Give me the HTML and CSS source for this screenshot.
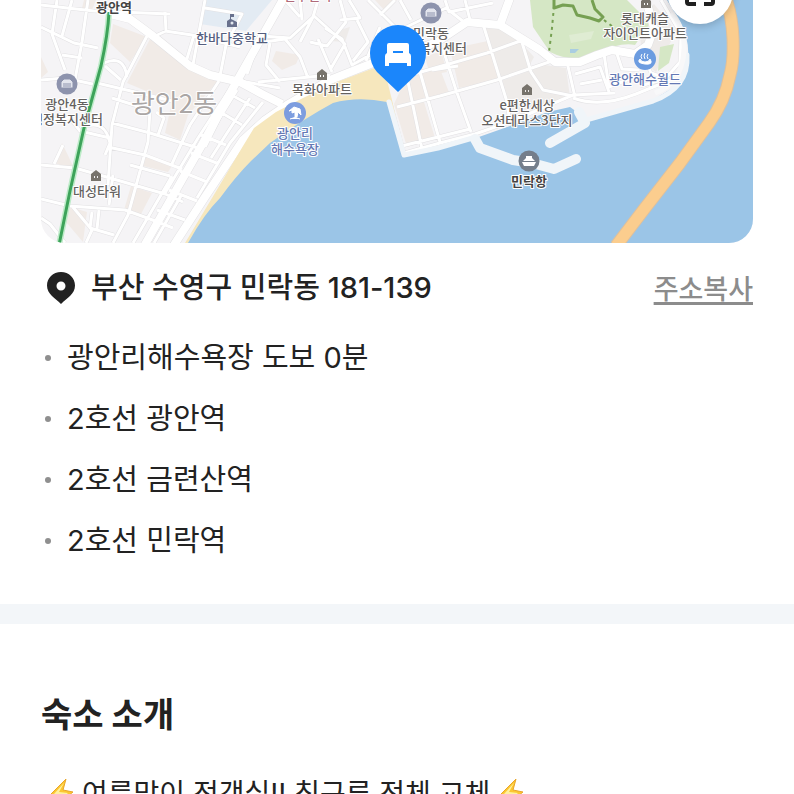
FILE: index.html
```html
<!DOCTYPE html>
<html lang="ko">
<head>
  <meta charset="UTF-8">
  <meta name="viewport" content="width=device-width, initial-scale=1">
  <title>숙소 위치</title>
  <link rel="stylesheet" href="styles.css">
</head>
<body>

  <section class="location">
    <div class="map">
      <svg class="map-canvas" viewBox="41 0 712 243" role="img" aria-label="지도">
        <defs>
          <path id="main-roads" d="M110 14L130 19L153 36L190 66L210 75L240 82L262 94L282 104 M143 248L203 143L233 88L285 -4 M172 248L205 197L243 140L265 120L287 105L330 80L373 63L400 55L437 42L467 22L500 25L510 -2 M500 25L540 50L555 62L580 62L597 55L612 50L635 54L648 45L654 28L646 0"/>
          <path id="small-roads" d="M41 5L94 11L170 14 M57 0L52 34L65 70 M72 0L62 36 M88 0L82 42L74 85 M41 27L74 43L98 48 M41 80L65 78L97 85 M62 55L82 58 M147 36L123 82L112 125L108 185 M97 83L135 92L172 101 M104 63Q124 54 127 77 M105 66L121 80 M165 12L166 31L153 37 M165 31L192 35L216 41L240 47 M192 70L205 0 M186 62L194 35 M220 76L226 45L242 14L205 8 M112 123L150 133L198 148 M108 147L145 155L182 169 M112 98L150 110L148 142L128 215L113 243 M156 112L164 118L158 135 M84 127Q105 119 110 143L105 155 M41 120L70 118L80 131L110 138 M63 145L54 164 M41 165L75 168L110 178L165 194L183 202 M41 199L70 206L125 210L150 219L173 228 M41 218L50 224L65 243 M72 206L92 230L86 243 M92 212L90 228L114 235 M99 210L97 229 M113 175L109 205 M130 165L170 176 M228 92L198 138L165 193 M172 176L133 243 M182 194L154 243 M219 81L190 125L171 166 M201 135L226 145 M191 153L219 164 M180 171L207 182 M169 190L197 201 M157 210L185 220 M217 110L242 125 M228 93L255 108 M237 90L219 119L205 147 M250 98L227 133L211 158 M263 102L230 143L197 198 M280 88L240 81 M258 82L330 75 M247 74L258 43L285 39L300 57L308 78 M270 43L266 65L280 82 M262 36L290 38L314 16L345 44L330 70 M302 20L300 0 M318 0L313 17L300 42 M318 39L332 72 M325 28L342 39L352 65L370 55 M340 0L346 22L327 46L310 42 M340 20L360 18L349 0 M357 20L368 42L353 61 M285 0L300 17 M368 0L378 10L400 32L418 48 M380 27L366 61 M380 15L395 0 M400 30L446 8L464 22 M411 20L400 0 M445 0L449 12L493 3 M465 0L470 20 M397 107L440 96L497 80L552 61 M407 76L487 53L523 40 M408 82L422 149 M418 65L440 142 M443 49L456 90L471 132 M483 24L507 102L510 123 M521 39L531 72L543 90L573 96 M432 70L458 66 M389 98L404 153L440 143L475 134L510 122L573 95L615 93 M402 146L470 129 M567 62L575 97 M575 74L600 67L609 92 M580 84L602 80 M604 54L609 87L640 75 M617 54L622 69L639 70 M661 0L681 34L680 62L665 79L640 86 M644 57L651 73L663 77 M655 28L672 31 M573 98Q600 108 636 94L678 77"/>
          <path id="apartment" d="M-5 5V-2L0 -6L5 -2V5ZM-2 0V2H-1V0ZM1 0V2H2V0Z" fill-rule="evenodd"/>
          <g id="office">
            <circle r="10.5"/>
            <path d="M-6 -2L-3 -5H3L6 -2V4H-6ZM-4 0H4M-4 2H4" fill="#e3e5ee" stroke="#8d93ad" stroke-width="1"/>
          </g>
        </defs>

        <rect class="land" x="41" width="712" height="243"/>

        <!-- blocks -->
        <path class="school" d="M203 0H272L246 31L200 24Z"/>
        <path class="block" d="M113 24L147 37L130 62L110 43ZM150 39L190 68L219 80L188 115L180 140L165 133L172 102L127 83ZM84 0H96L92 10L82 8ZM41 57L48 72L41 78ZM62 143L75 170L55 163ZM144 155L174 163L168 172L143 166ZM131 186L152 193L140 216L124 210ZM70 207L87 212L83 242L66 222ZM276 51L300 55L296 64L282 70L272 61ZM202 75L219 80L211 89ZM375 0L386 12L397 0ZM406 78L440 69L450 95L424 102L435 138L407 147L394 104ZM425 57L441 51L447 72L430 75ZM450 49L520 34L521 40L498 80L459 88Z"/>
        <path class="block-gray" d="M485 28L510 30L534 57L527 70L501 78L511 119L530 113L570 97L566 68L545 65L501 81ZM638 19L654 4L676 31L656 72L643 62ZM336 31L350 27L345 42L330 41Z"/>
        <path class="park" d="M530 0L533 27L550 52Q574 64 597 53T635 45L650 23L627 0Z"/>
        <path class="park" d="M660 47L674 44L669 63L658 71Z"/>
        <path class="park-lawn" d="M569 35L594 31L591 39L571 43Z"/>

        <use href="#small-roads" class="road-edge small"/>
        <use href="#main-roads" class="road-edge main"/>
        <use href="#small-roads" class="road small"/>
        <use href="#main-roads" class="road main"/>

        <!-- water and shore -->
        <path class="beach" d="M185 243L215 193L243 146L254 128L276 112L303 98L337 82L374 68L385 72L392 100L404 155L310 180L205 243Z"/>
        <path class="water" d="M188 243Q204 214 220 198Q236 176 251 161L270 143Q305 118 333 103Q358 96 387 102L396 121L403 157L476 138L510 126L548 112L570 107L588 120L653 100L679 84Q687 76 688 61Q690 38 679 20L667 0H753V243Z"/>
        <path class="pier" d="M389 102L404 155L438 148L476 137"/>
        <path class="pier wide" d="M475 139L480 148L513 160L532 163L554 169L576 159M550 143L585 123L579 112"/>
        <path class="pier" d="M586 120L653 101Q689 88 687 55"/>
        <path class="shore-road" d="M672 13Q688 34 683 59T655 93"/>

        <path class="bridge-edge" d="M725 -4Q732 15 733 38T730 75Q725 101 709 123L680 163L645 208L616 246"/>
        <path class="bridge" d="M725 -4Q732 15 733 38T730 75Q725 101 709 123L680 163L645 208L616 246"/>

        <path class="trail-dots" d="M554 6L552 28L549 52M604 20L613 27"/>
        <path class="trail" d="M554 0V8L563 5L573 6L577 15L590 18L599 21L603 17L595 9L592 0"/>

        <path class="subway-glow" d="M109 12Q108 34 101 66L84 128L70 191L59 245"/>
        <path class="subway" d="M109 12Q108 34 101 66L84 128L70 191L59 245"/>

        <!-- place icons -->
        <g fill="#8d93ad">
          <use href="#office" x="67" y="84"/>
          <use href="#office" x="431" y="13"/>
        </g>
        <g fill="#77736c">
          <use href="#apartment" x="96" y="176"/>
          <use href="#apartment" x="322" y="75"/>
          <use href="#apartment" x="527" y="90"/>
          <use href="#apartment" x="646" y="3"/>
        </g>
        <path d="M227 27V21L230 19V14H234V17H231V19L237 22V27Z" fill="#69718d"/>
        <circle cx="232" cy="23" r="1.5" fill="#e2e8ef"/>
        <g transform="translate(295 113)">
          <circle r="11" fill="#7d9ddf"/>
          <path d="M-6 -2L-1 -6L5 -4L6 2L3 -1L2 4H0V-1L-3 0V-3ZM-5 6Q0 3 5 6" fill="#fff" stroke="#fff" stroke-width="1"/>
        </g>
        <g transform="translate(645 59)">
          <circle r="11" fill="#6c9ce0"/>
          <path d="M-3 -5Q-5 -3 -3 0M0 -6Q-2 -3 0 0M3 -5Q1 -3 3 0" fill="none" stroke="#fff"/>
          <path d="M-5 0Q-9 4 0 5T5 0Q4 3 0 3T-5 0Z" fill="#fff" stroke="#fff"/>
        </g>
        <g transform="translate(529 161)">
          <circle r="10.5" fill="#747e8b"/>
          <path d="M-6 0L-3 -3V-5H3V-3L6 0ZM-7 1H7L5 5H-5Z" fill="#fff"/>
        </g>
        <path d="M570 49H579L575 53H570Z" fill="#a9cde1"/>

        <g class="place">
          <text class="station" x="114" y="12">광안역</text>
          <text class="clinic" x="308" y="0">산부인과</text>
          <text class="public" x="232" y="43">한바다중학교</text>
          <text x="67" y="109">광안4동</text>
          <text x="67" y="124">행정복지센터</text>
          <text class="district" x="174" y="113">광안2동</text>
          <text x="97" y="196">대성타워</text>
          <text x="322" y="94">목화아파트</text>
          <text class="leisure" x="295" y="138">광안리</text>
          <text class="leisure" x="295" y="154">해수욕장</text>
          <text x="431" y="38">민락동</text>
          <text x="431" y="53">행정복지센터</text>
          <text x="527" y="110">e편한세상</text>
          <text x="527" y="125">오션테라스3단지</text>
          <text class="harbor" x="529" y="186">민락항</text>
          <text x="645" y="23">롯데캐슬</text>
          <text x="645" y="38">자이언트아파트</text>
          <text class="leisure" x="645" y="84">광안해수월드</text>
        </g>

        <path d="M398 92L377 72Q370 64 370 53A28 28 0 0 1 426 53Q426 64 419 72Z" fill="#1b86fb"/>
        <path d="M389 43H407Q409 43 409 45V53Q411 54 411 56V66H407V63H389V66H385V56Q385 54 387 53V45Q387 43 389 43ZM393 51V53H403V51Z" fill="#fff" fill-rule="evenodd"/>
      </svg>

      <button class="expand" type="button" aria-label="지도 크게 보기">
        <svg width="30" height="30" viewBox="0 0 30 30" fill="none" stroke="#202020" stroke-width="4" stroke-linejoin="round">
          <path d="M2 11V4Q2 2 4 2H11M19 2H26Q28 2 28 4V11M28 19V26Q28 28 26 28H19M11 28H4Q2 28 2 26V19"/>
        </svg>
      </button>
    </div>

    <div class="address">
      <svg class="address-pin" width="28" height="34" viewBox="0 0 28 34" aria-hidden="true">
        <path d="M14 1C6 1 0 7 0 14.500C0 23 8 27 14 33C20 27 28 23 28 14.500C28 7 22 1 14 1ZM14 10.500A4.500 4.500 0 1 1 14 19.500A4.500 4.500 0 0 1 14 10.500Z" fill="#222" fill-rule="evenodd"/>
      </svg>
      <span class="address-text">부산 수영구 민락동 181-139</span>
      <button class="copy" type="button">주소복사</button>
    </div>

    <ul class="nearby">
      <li>광안리해수욕장 도보 0분</li>
      <li>2호선 광안역</li>
      <li>2호선 금련산역</li>
      <li>2호선 민락역</li>
    </ul>
  </section>

  <section class="intro">
    <h2>숙소 소개</h2>
    <p>
      <svg class="bolt" width="28" height="32" viewBox="0 0 28 32" aria-hidden="true">
        <path d="M19 1L2 18L12 19L5 31L26 14L16 12Z" fill="#fcc832" stroke="#e9a52a" stroke-linejoin="round"/>
        <path d="M17 5L7 16L15 17L11 24L21 15L12 14Z" fill="#fff0a0"/>
      </svg>
      <span>여름맞이 전객실!! 침구류 전체 교체</span>
      <svg class="bolt" width="28" height="32" viewBox="0 0 28 32" aria-hidden="true">
        <path d="M19 1L2 18L12 19L5 31L26 14L16 12Z" fill="#fcc832" stroke="#e9a52a" stroke-linejoin="round"/>
        <path d="M17 5L7 16L15 17L11 24L21 15L12 14Z" fill="#fff0a0"/>
      </svg>
    </p>
  </section>

</body>
</html>
```
FILE: styles.css
```css
* {
  box-sizing: border-box;
}

body {
  margin: 0;
  background-color: #fff;
  color: #222;
  font-family: Inter, "Noto Sans CJK KR", sans-serif;
  font-size: 28px;
  line-height: 42px;
}

button {
  border: none;
  padding: 0;
  font: inherit;
  cursor: pointer;
}

.location {
  padding: 0 41px 42px;
  border-bottom: 20px solid #f3f6f9;
}

/* Map */
.map {
  position: relative;
  overflow: hidden;
  border-radius: 0 0 24px 24px;
}

.map-canvas {
  display: block;
  width: 100%;
}

.land {
  fill: #f5f4f6;
}

.school {
  fill: #e3ebf3;
}

.block {
  fill: #f1ebe7;
}

.block-gray {
  fill: #eeebe9;
}

.park {
  fill: #d5e7c5;
}

.park-lawn {
  fill: #dfecd3;
}

.beach {
  fill: #f6e7bd;
}

.water {
  fill: #9bc5e7;
}

.road,
.road-edge,
.pier,
.shore-road,
.bridge,
.bridge-edge,
.trail,
.trail-dots,
.subway,
.subway-glow {
  fill: none;
  stroke-linejoin: round;
}

.road {
  stroke: #fff;
}

.road.small {
  stroke-width: 3px;
}

.road.main {
  stroke-width: 8px;
}

.road-edge {
  stroke: #e2e1e3;
}

.road-edge.small {
  stroke-width: 4px;
}

.road-edge.main {
  stroke-width: 9px;
}

.pier {
  stroke: #f0f5f9;
  stroke-width: 5px;
  stroke-linecap: round;
}

.pier.wide {
  stroke-width: 10px;
}

.shore-road {
  stroke: #f8f8f9;
  stroke-width: 5px;
}

.bridge-edge {
  stroke: #dfc09b;
  stroke-width: 13px;
}

.bridge {
  stroke: #fbcd8e;
  stroke-width: 11px;
}

.trail,
.trail-dots {
  stroke: #76a052;
  stroke-width: 2px;
}

.trail {
  stroke-width: 3px;
}

.trail-dots {
  stroke-dasharray: 3 4;
}

.subway-glow {
  stroke: #bdebc8;
  stroke-width: 6px;
}

.subway {
  stroke: #3da35a;
  stroke-width: 3px;
}

.place {
  fill: #65625f;
  stroke: #fff;
  stroke-width: 2px;
  stroke-linejoin: round;
  paint-order: stroke;
  font-family: "Noto Sans CJK KR", sans-serif;
  font-size: 13px;
  font-weight: 500;
  text-anchor: middle;
}

.place .station,
.place .harbor {
  fill: #444;
  font-weight: 700;
}

.place .clinic {
  fill: #b06a7a;
}

.place .public {
  fill: #555e7e;
}

.place .leisure {
  fill: #6478b4;
}

.place .district {
  fill: #aaa6a5;
  font-size: 26px;
  font-weight: 400;
}

.expand {
  position: absolute;
  top: -42px;
  right: 20px;
  display: flex;
  align-items: center;
  justify-content: center;
  width: 66px;
  height: 66px;
  border-radius: 50%;
  background-color: #fff;
  box-shadow: 0 2px 8px rgba(0, 0, 0, 0.2);
}

/* Address */
.address {
  display: flex;
  align-items: center;
  padding-top: 24px;
  font-size: 29px;
}

.address-pin {
  flex: none;
  margin: 0 16px 0 6px;
}

.address-text {
  font-weight: 500;
}

.copy {
  margin-left: auto;
  padding-top: 4px;
  background: none;
  color: #8c8c8c;
  font-size: 27px;
  font-weight: 500;
  line-height: 38px;
  text-decoration: underline;
  text-decoration-thickness: 3px;
  text-underline-offset: 3px;
}

.nearby {
  display: flex;
  flex-direction: column;
  gap: 19px;
  margin: 28px 0 0;
  padding: 0;
  font-size: 29px;
  list-style: none;
}

.nearby li {
  display: flex;
  align-items: center;
  gap: 16px;
  padding-left: 4px;
}

.nearby li::before {
  content: "";
  width: 6px;
  height: 6px;
  border-radius: 50%;
  background-color: #8f8f8f;
}

/* Intro */
.intro {
  padding: 69px 41px 0;
}

.intro h2 {
  margin: 0 0 36px;
  font-size: 34px;
  font-weight: 700;
  line-height: 44px;
}

.intro p {
  display: flex;
  align-items: center;
  gap: 7px;
  margin: 0;
  padding-left: 6px;
}

.bolt {
  flex: none;
}
```
